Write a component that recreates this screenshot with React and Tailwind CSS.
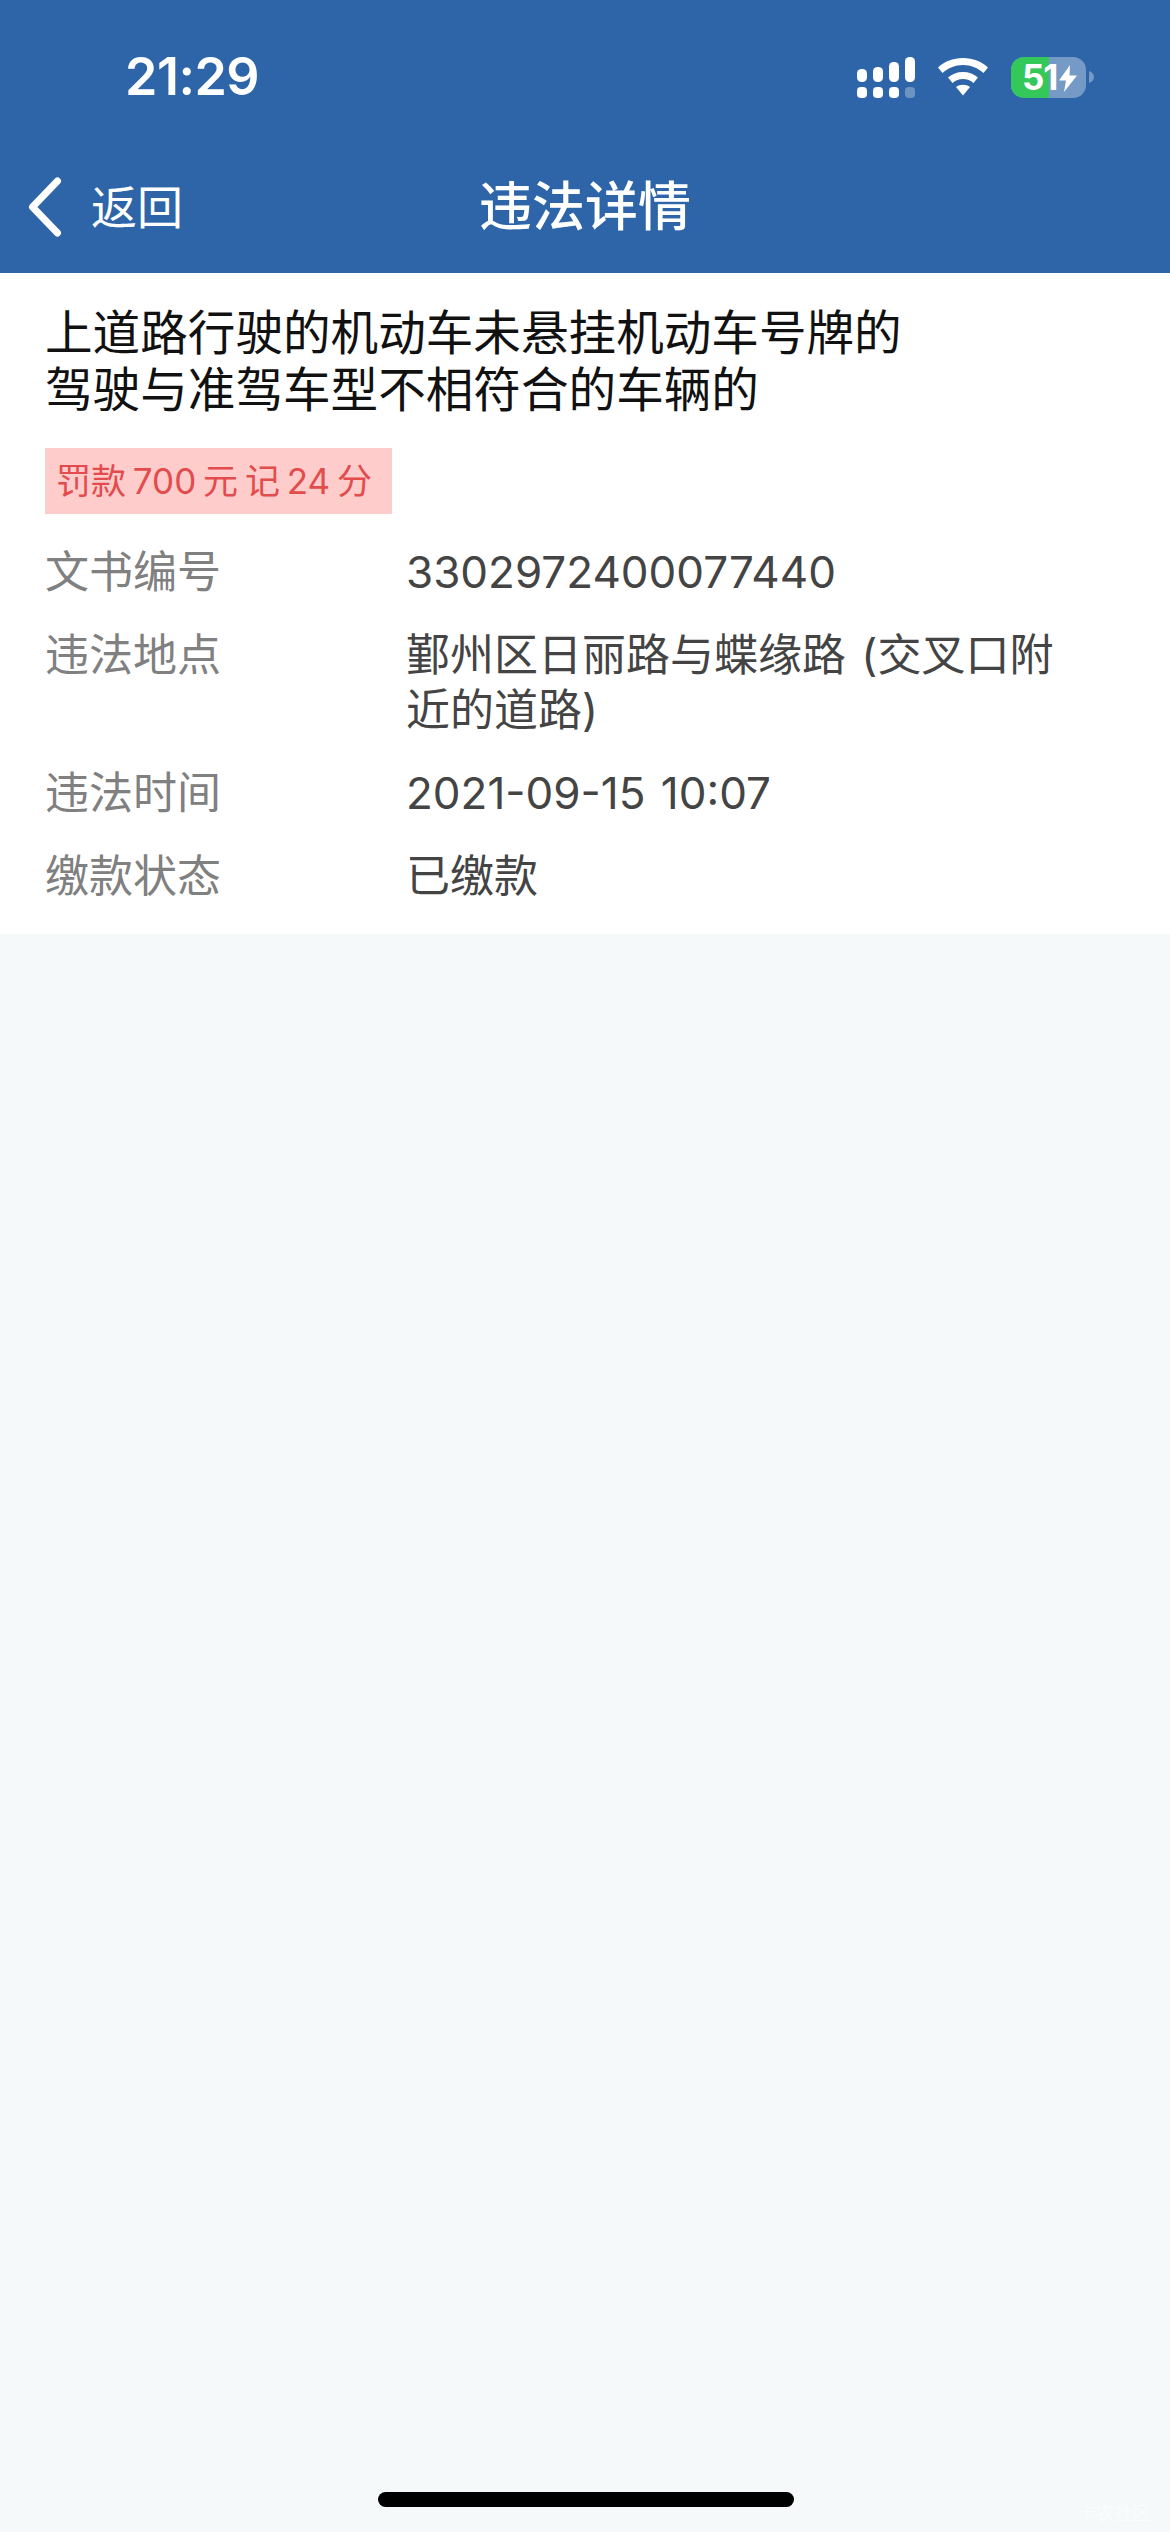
const FONT = "font-['Inter','Noto_Sans_CJK_SC',sans-serif]";

function Signal() {
  const columns = [
    { x: 0, y: 12, h: 13 },
    { x: 16, y: 10, h: 15 },
    { x: 32, y: 5, h: 20 },
    { x: 48, y: 0, h: 25 },
  ];
  return (
    <svg width="58" height="41" viewBox="0 0 58 41" className="block">
      {columns.map((c, i) => (
        <g key={i} fill="#fff">
          <rect x={c.x} y={c.y} width="10" height={c.h} rx="4.5" />
          <rect x={c.x} y="30" width="10" height="11" rx="4" fillOpacity={i === 3 ? 0.3 : 1} />
        </g>
      ))}
    </svg>
  );
}

function Wifi() {
  return (
    <svg width="50" height="38" viewBox="0 0 50 38" className="block">
      <path d="M0 9.500C6.500 3.500 15 0 25 0s18.500 3.500 25 9.500l-4.500 5.500C40 10 33 7 25 7S10 10 4.500 15z" fill="#fff" />
      <path d="M10 19.500C14 16 19 14 25 14s11 2 15 5.500l-4.500 5.500C32.500 22.500 29 21 25 21s-7.500 1.500-10.500 4z" fill="#fff" />
      <path d="M18 29c2-1.500 4.500-2.300 7-2.300s5 .8 7 2.300l-7 8.500z" fill="#fff" />
    </svg>
  );
}

function Battery() {
  return (
    <div className="flex items-center gap-[3px]">
      <div className="relative h-[41px] w-[75px] overflow-hidden rounded-[13px] bg-white/35">
        <div className="h-full w-[38px] bg-[#34c759]" />
        <span className="absolute left-[11px] top-0 font-['Inter',sans-serif] text-[35px] font-bold leading-[41px] tracking-[-1px] text-white">
          51
        </span>
        <svg width="18" height="27" viewBox="0 0 18 27" className="absolute left-[48px] top-[8px]">
          <path d="M11 0 0 15.500h7L5 27 18 10.500h-7.500z" fill="#fff" />
        </svg>
      </div>
      <svg width="5" height="12" viewBox="0 0 5 12" className="block">
        <path d="M0 0c3 1 5 3 5 6s-2 5-5 6z" fill="#fff" fillOpacity="0.35" />
      </svg>
    </div>
  );
}

function DetailRow({ label, children }) {
  return (
    <div className="flex text-[44px] leading-[55px]">
      <div className="w-[361px] shrink-0 text-[#808080]">{label}</div>
      <div className="min-w-0 flex-1 pr-[100px] text-[#444444] [word-spacing:3px]">{children}</div>
    </div>
  );
}

export default function App() {
  return (
    <div className={`${FONT} relative flex min-h-[2532px] flex-col bg-[#f6f9fa]`}>
      <header className="h-[273px] bg-[#2d65a8] text-white">
        <div className="flex h-[154px] items-center justify-between pl-[125px] pr-[76px]">
          <span className="font-['Inter',sans-serif] text-[52px] font-semibold leading-none tracking-[-0.500px]">21:29</span>
          <div className="flex items-center gap-[23px]">
            <Signal />
            <Wifi />
            <Battery />
          </div>
        </div>
        <div className="grid h-[106px] grid-cols-[1fr_auto_1fr] items-center px-[28px]">
          <div className="flex items-center gap-[29px]">
            <svg width="34" height="60" viewBox="0 0 34 60" className="block">
              <path d="M29.500 4 4.500 30l25 26" fill="none" stroke="#fff" strokeWidth="7" strokeLinecap="round" strokeLinejoin="round" />
            </svg>
            <span className="text-[46px] font-normal leading-none">返回</span>
          </div>
          <h1 className="text-[53px] font-medium leading-none">违法详情</h1>
          <div />
        </div>
      </header>

      <section className="bg-white pb-[30px] pl-[45px] pt-[31px]">
        <p className="text-[47.600px] leading-[57px] text-[#111111]">
          上道路行驶的机动车未悬挂机动车号牌的
          <br />
          驾驶与准驾车型不相符合的车辆的
        </p>
        <div className="mt-[30px] flex h-[66px] w-[347px] items-center whitespace-nowrap bg-[#ffcccc] pl-[11px] text-[35px] text-[#e24c4c] [word-spacing:-3px]">
          罚款 700 元 记 24 分
        </div>
        <div className="mt-[31px] flex flex-col gap-[28px]">
          <DetailRow label="文书编号">3302972400077440</DetailRow>
          <DetailRow label="违法地点">鄞州区日丽路与蝶缘路 (交叉口附近的道路)</DetailRow>
          <DetailRow label="违法时间">2021-09-15 10:07</DetailRow>
          <DetailRow label="缴款状态">已缴款</DetailRow>
        </div>
      </section>

      {/* Home indicator and the corner mark sit above the empty page area */}
      <div className="absolute left-[378px] top-[2492px] h-[15px] w-[416px] rounded-full bg-black" />
      <span className="absolute right-[20px] top-[2505px] text-[18px] leading-none text-white/60">卡农社区</span>
    </div>
  );
}
